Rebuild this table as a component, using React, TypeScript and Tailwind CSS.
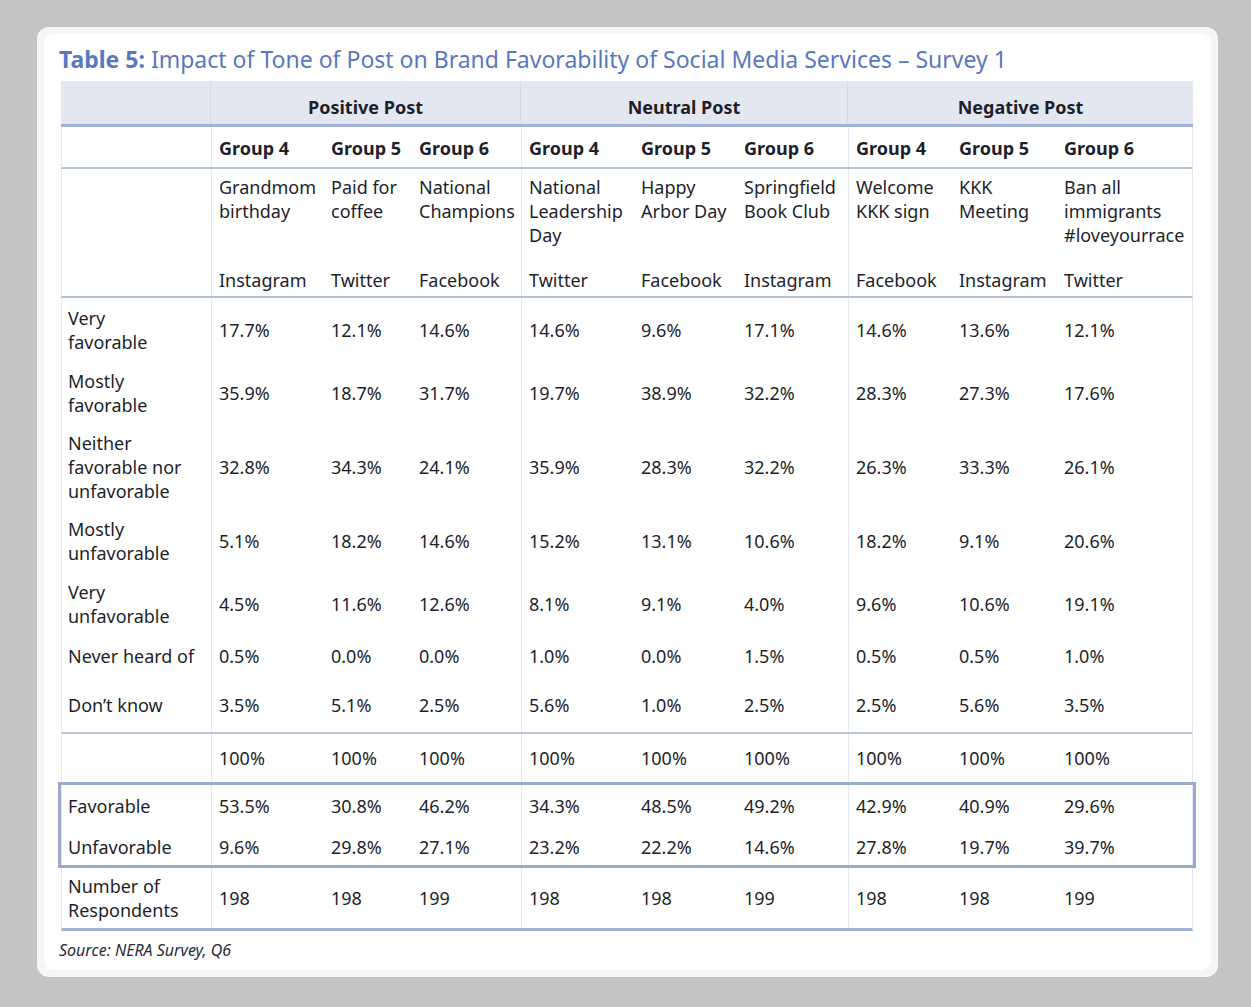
import React from 'react';

type Col = { group: string; desc: string[]; platform: string };

const cols: Col[] = [
  { group: 'Group 4', desc: ['Grandmom', 'birthday'], platform: 'Instagram' },
  { group: 'Group 5', desc: ['Paid for', 'coffee'], platform: 'Twitter' },
  { group: 'Group 6', desc: ['National', 'Champions'], platform: 'Facebook' },
  { group: 'Group 4', desc: ['National', 'Leadership', 'Day'], platform: 'Twitter' },
  { group: 'Group 5', desc: ['Happy', 'Arbor Day'], platform: 'Facebook' },
  { group: 'Group 6', desc: ['Springfield', 'Book Club'], platform: 'Instagram' },
  { group: 'Group 4', desc: ['Welcome', 'KKK sign'], platform: 'Facebook' },
  { group: 'Group 5', desc: ['KKK', 'Meeting'], platform: 'Instagram' },
  { group: 'Group 6', desc: ['Ban all', 'immigrants', '#loveyourrace'], platform: 'Twitter' },
];

type Row = { label: string[]; values: string[]; h: string };

const rows: Row[] = [
  { label: ['Very', 'favorable'], h: 'h-[63px]', values: ['17.7%', '12.1%', '14.6%', '14.6%', '9.6%', '17.1%', '14.6%', '13.6%', '12.1%'] },
  { label: ['Mostly', 'favorable'], h: 'h-[63px]', values: ['35.9%', '18.7%', '31.7%', '19.7%', '38.9%', '32.2%', '28.3%', '27.3%', '17.6%'] },
  { label: ['Neither', 'favorable nor', 'unfavorable'], h: 'h-[85px]', values: ['32.8%', '34.3%', '24.1%', '35.9%', '28.3%', '32.2%', '26.3%', '33.3%', '26.1%'] },
  { label: ['Mostly', 'unfavorable'], h: 'h-[63px]', values: ['5.1%', '18.2%', '14.6%', '15.2%', '13.1%', '10.6%', '18.2%', '9.1%', '20.6%'] },
  { label: ['Very', 'unfavorable'], h: 'h-[63px]', values: ['4.5%', '11.6%', '12.6%', '8.1%', '9.1%', '4.0%', '9.6%', '10.6%', '19.1%'] },
  { label: ['Never heard of'], h: 'h-[41px]', values: ['0.5%', '0.0%', '0.0%', '1.0%', '0.0%', '1.5%', '0.5%', '0.5%', '1.0%'] },
];

const grid =
  'grid grid-cols-[150px_112px_88px_110px_112px_103px_112px_103px_105px_137px] border-x border-[#e3e8f2]';

// vertical separators after the label column and after each post group
const sep = (i: number) => (i === 0 || i === 3 || i === 6 ? 'border-r border-[#e3e8f2]' : '');
const pad = (i: number) => (i === 0 ? 'pl-[6px]' : 'pl-[7px]');

function DataRow({ label, values, h, extra = '' }: { label: string[]; values: string[]; h: string; extra?: string }) {
  const cells = [label, ...values.map((v) => [v])];
  return (
    <div className={`${grid} ${extra}`}>
      {cells.map((lines, i) => (
        <div key={i} className={`${h} ${sep(i)} ${pad(i)} flex flex-col justify-center`}>
          {lines.map((l) => (
            <span key={l}>{l}</span>
          ))}
        </div>
      ))}
    </div>
  );
}

export default function App() {
  return (
    <div className="min-h-screen bg-[#c4c4c4] pl-[37px] pt-[27px]">
      <div className="w-[1181px] h-[950px] rounded-[12px] bg-[#f4f6f8] p-[7px]">
        <div
          className="h-full rounded-[9px] bg-white pl-[15px] pt-[10px] text-[#1e1f2b]"
          style={{ fontFamily: '"Noto Sans", "Open Sans", sans-serif' }}
        >
          <h1 className="text-[23px] leading-[30px] text-[#5878c0]">
            <span className="font-bold">Table 5:</span> Impact of Tone of Post on Brand Favorability of Social Media Services – Survey 1
          </h1>

          <div className="ml-[2px] mt-[7px] w-[1132px] text-[18px] leading-[24px]">
            {/* tone of post */}
            <div className="grid grid-cols-[150px_310px_327px_345px] h-[46px] bg-[#e3e8f0] border-b-[3px] border-[#a2b2d6] font-bold">
              <div className="border-r border-[#d3daea]" />
              <div className="flex justify-center pt-[14px] border-r border-[#d3daea]">Positive Post</div>
              <div className="flex justify-center pt-[14px] border-r border-[#d3daea]">Neutral Post</div>
              <div className="flex justify-center pt-[14px]">Negative Post</div>
            </div>

            {/* group headers */}
            <div className={`${grid} h-[42px] border-b-[2px] border-b-[#b3c0de] font-bold`}>
              <div className={sep(0)} />
              {cols.map((c, i) => (
                <div key={i} className={`${sep(i + 1)} ${pad(i + 1)} flex items-center pt-[2px]`}>
                  {c.group}
                </div>
              ))}
            </div>

            {/* post descriptions and platforms */}
            <div className={`${grid} h-[129px] border-b-[2px] border-b-[#b3c0de]`}>
              <div className={sep(0)} />
              {cols.map((c, i) => (
                <div key={i} className={`${sep(i + 1)} ${pad(i + 1)} flex flex-col pt-[6px]`}>
                  <div className="h-[72px]">
                    {c.desc.map((d) => (
                      <div key={d}>{d}</div>
                    ))}
                  </div>
                  <div className="mt-[21px]">{c.platform}</div>
                </div>
              ))}
            </div>

            {rows.map((r) => (
              <DataRow key={r.label.join(' ')} label={r.label} values={r.values} h={r.h} />
            ))}
            <DataRow
              label={["Don’t know"]}
              values={['3.5%', '5.1%', '2.5%', '5.6%', '1.0%', '2.5%', '2.5%', '5.6%', '3.5%']}
              h="h-[56px] pt-[1px]"
            />

            <DataRow
              label={['']}
              values={Array(9).fill('100%')}
              h="h-[48px]"
              extra="border-t-[2px] border-t-[#b9c5e0]"
            />

            {/* favorable summary box */}
            <div className="-mx-[3px] border-[3px] border-[#9aa9cd]">
              <DataRow
                label={['Favorable']}
                values={['53.5%', '30.8%', '46.2%', '34.3%', '48.5%', '49.2%', '42.9%', '40.9%', '29.6%']}
                h="h-[41px]"
              />
              <DataRow
                label={['Unfavorable']}
                values={['9.6%', '29.8%', '27.1%', '23.2%', '22.2%', '14.6%', '27.8%', '19.7%', '39.7%']}
                h="h-[39px] pt-[2px]"
              />
            </div>

            <DataRow
              label={['Number of', 'Respondents']}
              values={['198', '198', '199', '198', '198', '199', '198', '198', '199']}
              h="h-[60px]"
              extra="border-b-[3px] border-b-[#a3b2d5]"
            />
          </div>

          <p className="mt-[8px] text-[16px] leading-[22px] italic text-[#2a2b36]">Source: NERA Survey, Q6</p>
        </div>
      </div>
    </div>
  );
}
